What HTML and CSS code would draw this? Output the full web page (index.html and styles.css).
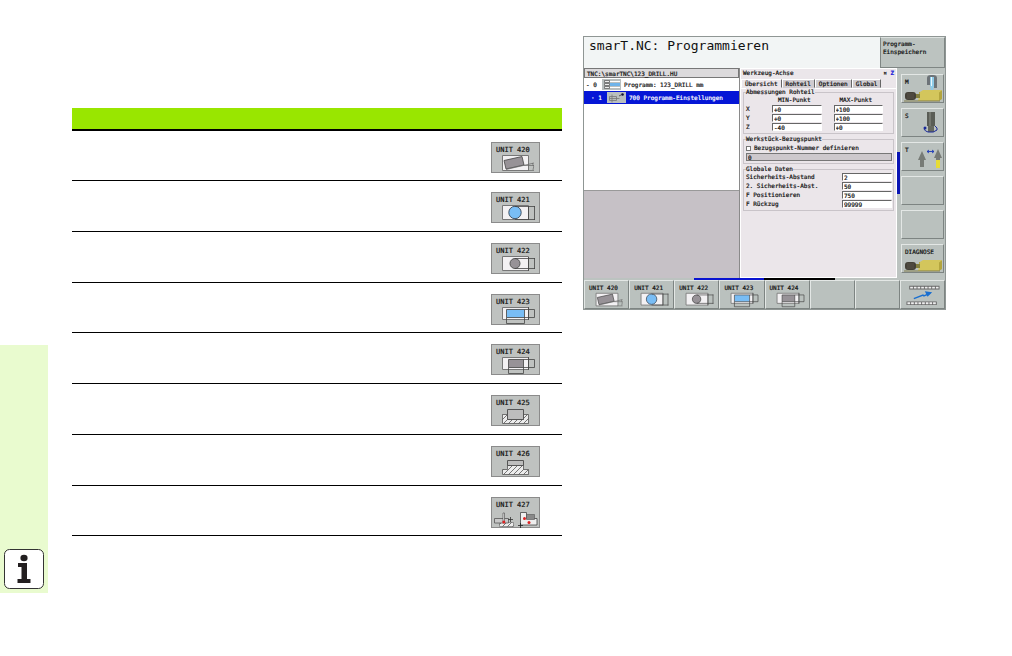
FILE: index.html
```
<!doctype html>
<html lang="de">
<head>
    <meta charset="UTF-8">
    <meta name="viewport" content="width=device-width, initial-scale=1.0">
    <title>smarT.NC: Programmieren</title>
    <link rel="stylesheet" href="styles.css">
</head>
<body>
<svg class="defs" aria-hidden="true">
    <pattern id="hatch" width="5" height="5" patternUnits="userSpaceOnUse">
        <rect width="5" height="5" fill="#ececec"/>
        <path d="M-1 6L6 -1M-1 1L1 -1M4 6L6 4" stroke="#555" stroke-width=".8"/>
    </pattern>
    <symbol id="u420" viewBox="0 11 49 19">
        <path d="M11.5 12.5h26v15h-26z" fill="#f3f1f3" stroke="#777"/>
        <path d="M13 17.5L31 13.5L33 22L15 26z" fill="#979297" stroke="#444" stroke-width=".8"/>
        <path d="M15 26.5L43 20M33 22.5h10M37 27.5h6M41.5 20q2 4 .5 7" fill="none" stroke="#666" stroke-width=".7"/>
    </symbol>
    <symbol id="u421" viewBox="0 11 49 19">
        <path d="M11.5 12.5h26v14h-26z" fill="#f3f1f3" stroke="#777"/>
        <circle cx="24" cy="19.5" r="6.2" fill="#79bdf5" stroke="#456"/>
        <path d="M24 13.5h20M24 26.5h20M37.5 13v14M43.5 13v14" stroke="#444" stroke-width=".8"/>
    </symbol>
    <symbol id="u422" viewBox="0 11 49 19">
        <path d="M11.5 12.5h26v14h-26z" fill="#f3f1f3" stroke="#777"/>
        <circle cx="24" cy="19.5" r="5" fill="#979297" stroke="#555"/>
        <path d="M24 14.5h20M24 24.5h20M37.5 13v14M43.5 14v11" stroke="#444" stroke-width=".8"/>
    </symbol>
    <symbol id="u423" viewBox="0 11 49 19">
        <path d="M11.5 12.5h26v12h-26z" fill="#f3f1f3" stroke="#777"/>
        <path d="M15.5 14.5h18v8h-18z" fill="#79bdf5"/>
        <path d="M15.5 14.5h28v8h-28zM15.5 22.5v6h18v-14M37.5 12v13" fill="none" stroke="#444" stroke-width=".8"/>
    </symbol>
    <symbol id="u424" viewBox="0 11 49 19">
        <path d="M11.5 12.5h26v12h-26z" fill="#f3f1f3" stroke="#777"/>
        <path d="M17.5 14.5h15v8h-15z" fill="#979297"/>
        <path d="M17.5 14.5h26v8h-26zM17.5 22.5v6h15v-14M37.5 12v13" fill="none" stroke="#444" stroke-width=".8"/>
    </symbol>
    <symbol id="u425" viewBox="0 11 49 19">
        <path d="M11.5 18.5h5v5h16v-5h5v9h-26z" fill="url(#hatch)" stroke="#555" stroke-width=".8"/>
        <path d="M16.5 13.5h16v10h-16z" fill="#bdbdbd" stroke="#555"/>
    </symbol>
    <symbol id="u426" viewBox="0 11 49 19">
        <path d="M11.5 27.5v-5h5v-4.5h16v4.5h5v5z" fill="url(#hatch)" stroke="#555" stroke-width=".8"/>
        <path d="M16.5 13.5h16v5h-16z" fill="#bdbdbd" stroke="#555"/>
    </symbol>
    <symbol id="u427" viewBox="0 11 49 19">
        <path d="M8.5 24.5h14v4h-14z" fill="url(#hatch)" stroke="#666" stroke-width=".6"/>
        <path d="M3.5 20.5h14v4.5h-14z" fill="#c8c8c8" stroke="#555" stroke-width=".8"/>
        <path d="M12 15h1.500v9h-1.500z" fill="#eee" stroke="#444" stroke-width=".6"/>
        <circle cx="12.800" cy="24" r="1.500" fill="#d22"/>
        <path d="M17 21.500h5M19.500 19v5" stroke="#333" stroke-width=".8"/>
        <path d="M29.500 14.500h6v6h10.500v6.500h-16.500z" fill="#eee" stroke="#444" stroke-width=".8"/>
        <path d="M35.500 16.500h8v5h-8z" fill="#888" stroke="#555" stroke-width=".6"/>
        <circle cx="33.500" cy="20.500" r="1.500" fill="#d22"/>
        <circle cx="38" cy="24.500" r="1.500" fill="#d22"/>
        <path d="M27 27.500h5M29.500 25v5" stroke="#222" stroke-width=".8"/>
    </symbol>
    <symbol id="motor" viewBox="0 0 40 14">
        <path d="M16 4h20l3 -2v9l-3 2h-20z" fill="#b3a53e"/>
        <path d="M17 4L20 2h19l-3 2.500v8.500h-21z" fill="#d3c65c"/>
        <path d="M12 6h5v4h-5z" fill="#84803f"/>
        <rect x="2" y="4" width="11" height="8" rx="3" fill="#444038"/>
        <path d="M4 6h7M4 8h7M4 10h7" stroke="#625c50" stroke-width=".7"/>
        <path d="M1 13h36" stroke="#807c4c"/>
    </symbol>
</svg>

<div class="page">
    <aside class="margin-bar">
        <svg class="info" viewBox="0 0 40 40" role="img" aria-label="Info">
            <rect x=".5" y=".5" width="39" height="39" rx="5" fill="#fff" stroke="#333"/>
            <ellipse cx="20" cy="9" rx="3.600" ry="3.200" fill="#231f20"/>
            <path d="M14 14h9v16h3.500v4h-13v-4h4v-12h-3.500z" fill="#231f20"/>
        </svg>
    </aside>

    <main class="columns">
        <table class="units">
            <thead>
                <tr><th></th><th></th></tr>
            </thead>
            <tbody>
                <tr><td></td><td><div class="thumb">UNIT 420<svg><use href="#u420"/></svg></div></td></tr>
                <tr><td></td><td><div class="thumb">UNIT 421<svg><use href="#u421"/></svg></div></td></tr>
                <tr><td></td><td><div class="thumb">UNIT 422<svg><use href="#u422"/></svg></div></td></tr>
                <tr><td></td><td><div class="thumb">UNIT 423<svg><use href="#u423"/></svg></div></td></tr>
                <tr><td></td><td><div class="thumb">UNIT 424<svg><use href="#u424"/></svg></div></td></tr>
                <tr><td></td><td><div class="thumb">UNIT 425<svg><use href="#u425"/></svg></div></td></tr>
                <tr><td></td><td><div class="thumb">UNIT 426<svg><use href="#u426"/></svg></div></td></tr>
                <tr><td></td><td><div class="thumb">UNIT 427<svg><use href="#u427"/></svg></div></td></tr>
            </tbody>
        </table>

        <section class="screen">
            <header class="screen-head">
                <h1>smarT.NC: Programmieren</h1>
                <div class="mode">Programm-<br>Einspeichern</div>
            </header>

            <div class="screen-body">
                <div class="tree">
                    <div class="path">TNC:\smarTNC\123_DRILL.HU</div>
                    <div class="tree-list">
                        <div class="node">
                            <span class="num">- 0</span>
                            <svg viewBox="0 0 19 11">
                                <rect width="19" height="11" fill="#b9bfbf"/>
                                <path d="M2.500 1.500h5v2h-5zM2.500 4.500h5v2h-5zM2.500 7.500h5v2h-5z" fill="#eee" stroke="#555" stroke-width=".7"/>
                                <path d="M8 4h10v3h-10z" fill="#6fb4ea"/>
                                <path d="M8 2.500h10M8 8.500h10" stroke="#fff"/>
                            </svg>
                            <span>Programm: 123_DRILL mm</span>
                        </div>
                        <div class="node selected">
                            <span class="num">· 1</span>
                            <svg viewBox="0 0 19 11">
                                <rect width="19" height="11" fill="#b9bfbf"/>
                                <path d="M2.500 4.500h7v4h-7zM2.500 6.500h10M5 2.500v8" fill="none" stroke="#777" stroke-width=".8"/>
                                <path d="M12 4l2 -1" stroke="#555"/>
                                <circle cx="15.500" cy="2.500" r="1.300" fill="#113"/>
                            </svg>
                            <span>700 Programm-Einstellungen</span>
                        </div>
                    </div>
                </div>

                <form class="form">
                    <div class="form-title"><span>Werkzeug-Achse</span><span>¤ <b>Z</b></span></div>
                    <nav class="tabs">
                        <button type="button" class="active">Übersicht</button>
                        <button type="button">Rohteil</button>
                        <button type="button">Optionen</button>
                        <button type="button">Global</button>
                    </nav>
                    <div class="groups">
                        <section class="group">
                            <h2>Abmessungen Rohteil</h2>
                            <div class="points">
                                <span></span><span class="col">MIN-Punkt</span><span class="col">MAX-Punkt</span>
                                <span>X</span><input aria-label="X MIN" value="+0"><input aria-label="X MAX" value="+100">
                                <span>Y</span><input aria-label="Y MIN" value="+0"><input aria-label="Y MAX" value="+100">
                                <span>Z</span><input aria-label="Z MIN" value="-40"><input aria-label="Z MAX" value="+0">
                            </div>
                        </section>
                        <section class="group">
                            <h2>Werkstück-Bezugspunkt</h2>
                            <label class="check"><input type="checkbox">Bezugspunkt-Nummer definieren</label>
                            <input class="wide" aria-label="Bezugspunkt-Nummer" value="0">
                        </section>
                        <section class="group">
                            <h2>Globale Daten</h2>
                            <div class="globals">
                                <label for="sa">Sicherheits-Abstand</label><input id="sa" value="2">
                                <label for="sa2">2. Sicherheits-Abst.</label><input id="sa2" value="50">
                                <label for="fp">F Positionieren</label><input id="fp" value="750">
                                <label for="fr">F Rückzug</label><input id="fr" value="99999">
                            </div>
                        </section>
                    </div>
                </form>

                <div class="scroll"></div>

                <div class="side-keys">
                    <button class="key">M
                        <svg viewBox="0 0 43 29">
                            <path d="M26 4q0 -3 4 -3h2q4 0 4 3v10h-3v-8h-4v5h-3z" fill="#6d7378"/>
                            <path d="M29 3h4v9l-1 4h-2l-1 -4z" fill="#8ecbe8"/>
                            <path d="M30 3h1v9h-1z" fill="#e8f6fc"/>
                            <use href="#motor" x="2" y="14" width="40" height="14"/>
                        </svg>
                    </button>
                    <button class="key">S
                        <svg viewBox="0 0 43 29">
                            <path d="M26 4h8v14h-8z" fill="#5a5d56"/>
                            <path d="M28 4h2v14h-2z" fill="#74776f"/>
                            <path d="M27 18h6v6h-6z" fill="#66695f"/>
                            <path d="M25 19q-4 3 2 5q6 1 9 -2q1 -2 -2 -4" fill="none" stroke="#1a2a9a"/>
                            <circle cx="24" cy="20" r="1.500" fill="#1a2a9a"/>
                        </svg>
                    </button>
                    <button class="key">T
                        <svg viewBox="0 0 43 29">
                            <path d="M21 9l4 9h-2v7h-4v-7h-2z" fill="#777b76"/>
                            <path d="M37 7l4 9h-2v3h-4v-3h-2z" fill="#777b76"/>
                            <path d="M35 18h4v8h-4z" fill="#e7dc35"/>
                            <path d="M26 9.500h7M28 8l-2 1.500l2 1.500M31 8l2 1.500l-2 1.500" fill="none" stroke="#1b38b8" stroke-width=".9"/>
                        </svg>
                    </button>
                    <button class="key" aria-label="frei"></button>
                    <button class="key" aria-label="frei"></button>
                    <button class="key">DIAGNOSE
                        <svg viewBox="0 0 43 29"><use href="#motor" x="2" y="14" width="40" height="14"/></svg>
                    </button>
                </div>
            </div>

            <div class="pages"><span></span><span class="on"></span><span class="off"></span></div>

            <footer class="softkeys">
                <button>UNIT 420<svg><use href="#u420"/></svg></button>
                <button>UNIT 421<svg><use href="#u421"/></svg></button>
                <button>UNIT 422<svg><use href="#u422"/></svg></button>
                <button>UNIT 423<svg><use href="#u423"/></svg></button>
                <button>UNIT 424<svg><use href="#u424"/></svg></button>
                <button aria-label="frei"></button>
                <button aria-label="frei"></button>
                <button aria-label="Umschalten">
                    <svg class="switch" viewBox="0 0 40 24">
                        <path d="M5 4h33M2 21h33" stroke="#666" stroke-width="4"/>
                        <path d="M6 4h32M3 21h32" stroke="#eee" stroke-width="2" stroke-dasharray="3 1"/>
                        <path d="M10 16l10 -4l1 1l7 -3" fill="none" stroke="#1a6fd0" stroke-width="1.500"/>
                        <path d="M22 8l8 1l-5 5z" fill="#1a6fd0"/>
                    </svg>
                </button>
            </footer>
        </section>
    </main>
</div>
</body>
</html>
```
FILE: styles.css
```
* {
    box-sizing: border-box;
}

body {
    margin: 0;
    background: #fff;
    color: #111;
    font-family: "DejaVu Sans Mono", monospace;
}

h1, h2 {
    margin: 0;
    font-weight: normal;
}

button, input {
    font: inherit;
    color: inherit;
    margin: 0;
    border-radius: 0;
}

.defs {
    position: absolute;
    width: 0;
    height: 0;
}

.page {
    display: flex;
    align-items: flex-start;
}

/* green strip at the page edge */
.margin-bar {
    flex: none;
    display: flex;
    align-items: flex-end;
    width: 48px;
    height: 248px;
    margin-top: 345px;
    padding: 4px;
    background: #e9fbcf;
}

.info {
    width: 40px;
    height: 40px;
}

.columns {
    flex: 1;
    display: grid;
    grid-template-columns: minmax(0, 490fr) minmax(0, 363fr);
    gap: 21px;
    align-items: start;
    padding: 36px 66px 0 24px;
}

/* table of units */
.units {
    width: 100%;
    margin-top: 72px;
    border-collapse: separate;
    border-spacing: 0;
    font-size: 7px;
    line-height: 8px;
    -webkit-text-stroke: 0.2px;
}

.units th {
    height: 23px;
    padding: 0;
    background: #99e600;
    border-bottom: 2px solid #000;
}

.units td {
    height: 51px;
    padding: 11px 0 0;
    border-bottom: 1px solid #000;
    vertical-align: top;
}

.units tr:first-child td,
.units tr:nth-child(4n) td {
    height: 50px;
}

.units td:last-child {
    width: 71px;
}

.thumb {
    width: 49px;
    height: 31px;
    padding: 3px 0 0 4px;
    background: #bfc2c0;
    border: 1px solid #8b8b8b;
}

.thumb svg {
    display: block;
    width: 49px;
    height: 19px;
    margin-left: -5px;
}

/* control screen */
.screen {
    background: #bcc3c0;
    border: 1px solid #8f9694;
    font-size: 6px;
    line-height: 8px;
    -webkit-text-stroke: 0.2px;
}

.screen-head {
    display: flex;
    height: 31px;
}

.screen-head h1 {
    flex: 1;
    padding: 1px 5px;
    background: #f2f5f5;
    font-size: 13px;
    line-height: 16px;
    -webkit-text-stroke: 0;
}

.mode {
    width: 65px;
    padding: 2px;
    border: 1px solid;
    border-color: #dde2e0 #7f8684 #7f8684 #7f8684;
}

.screen-body {
    display: flex;
    height: 210px;
}

.tree {
    flex: 1;
    background: #c6c1c6;
    border-right: 1px solid #8a8a8a;
}

.path {
    height: 10px;
    padding: 1px 2px;
    background: #dcdadc;
    border: 1px solid #777;
    line-height: 7px;
}

.tree-list {
    height: 113px;
    background: #fff;
    border-bottom: 1px solid #999;
}

.node {
    display: flex;
    align-items: center;
    gap: 3px;
    height: 13px;
    padding-left: 2px;
    white-space: nowrap;
}

.node svg {
    width: 19px;
    height: 11px;
}

.num {
    width: 13px;
}

.selected {
    padding-left: 7px;
    background: #0516d6;
    color: #fff;
}

.form {
    flex: 1;
    background: #ebe6ea;
    border: 1px solid #fff;
    white-space: nowrap;
}

.form-title {
    display: flex;
    justify-content: space-between;
    height: 10px;
    padding: 0 2px;
}

.form-title b {
    color: #1414d8;
}

.tabs {
    display: flex;
    height: 10px;
    border-bottom: 1px solid #fff;
}

.tabs button {
    padding: 0 3px;
    border: 1px solid;
    border-color: #fff #666 transparent #fff;
    background: #cfcbcf;
    line-height: 7px;
}

.tabs .active {
    background: #ebe6ea;
}

.groups {
    display: flex;
    flex-direction: column;
    gap: 5px;
    padding: 3px 2px;
}

.group {
    padding: 0 1px 2px 2px;
    border: 1px solid #c9c4c9;
}

.group h2 {
    width: max-content;
    margin-top: -5px;
    background: #ebe6ea;
    font-size: 6px;
    line-height: 8px;
}

.points {
    display: grid;
    grid-template-columns: 14px 1fr 1fr;
    grid-auto-rows: 8px;
    gap: 1px 12px;
    padding-right: 9px;
}

.points .col {
    padding-left: 6px;
}

.form input:not([type]) {
    width: 100%;
    height: 8px;
    padding: 0 1px;
    border: 1px solid;
    border-color: #666 #fff #fff #666;
    background: #fff;
    line-height: 6px;
}

.check {
    display: flex;
    align-items: center;
    gap: 3px;
    height: 10px;
}

.check input {
    appearance: none;
    width: 5px;
    height: 5px;
    border: 1px solid #777;
    background: #fff;
}

.form .wide:not([type]) {
    display: block;
    border-color: #777;
    background: #cdc8cc;
}

.globals {
    display: grid;
    grid-template-columns: 1fr 50px;
    grid-auto-rows: 8px;
    gap: 1px 0;
}

.scroll {
    width: 3px;
    height: 42px;
    margin-top: 84px;
    background: #0a14b4;
}

.side-keys {
    display: flex;
    flex-direction: column;
    gap: 5px;
    width: 45px;
    padding: 6px 1px 0;
}

.key, .softkeys button {
    position: relative;
    border: 1px solid;
    border-color: #e3e7e5 #7d8482 #7d8482 #e3e7e5;
    background: #bac1be;
    line-height: 8px;
    text-align: left;
}

.key {
    height: 29px;
    padding: 0 0 14px 3px;
}

/* drawing lies under the key's caption */
.key svg {
    position: absolute;
    inset: -1px;
    width: 43px;
    height: 29px;
}

.pages {
    display: grid;
    grid-template-columns: 110fr 71fr 71fr 110fr;
    height: 2px;
}

.pages .on {
    background: #0a14d0;
}

.pages .off {
    background: #000;
}

.softkeys {
    display: grid;
    grid-template-columns: repeat(8, minmax(0, 1fr));
    height: 29px;
}

.softkeys button {
    display: flex;
    flex-direction: column;
    padding: 3px 0 0 4px;
}

.softkeys svg {
    width: 42px;
    height: 16px;
    margin-left: -3px;
}

.softkeys .switch {
    height: 22px;
}
```
